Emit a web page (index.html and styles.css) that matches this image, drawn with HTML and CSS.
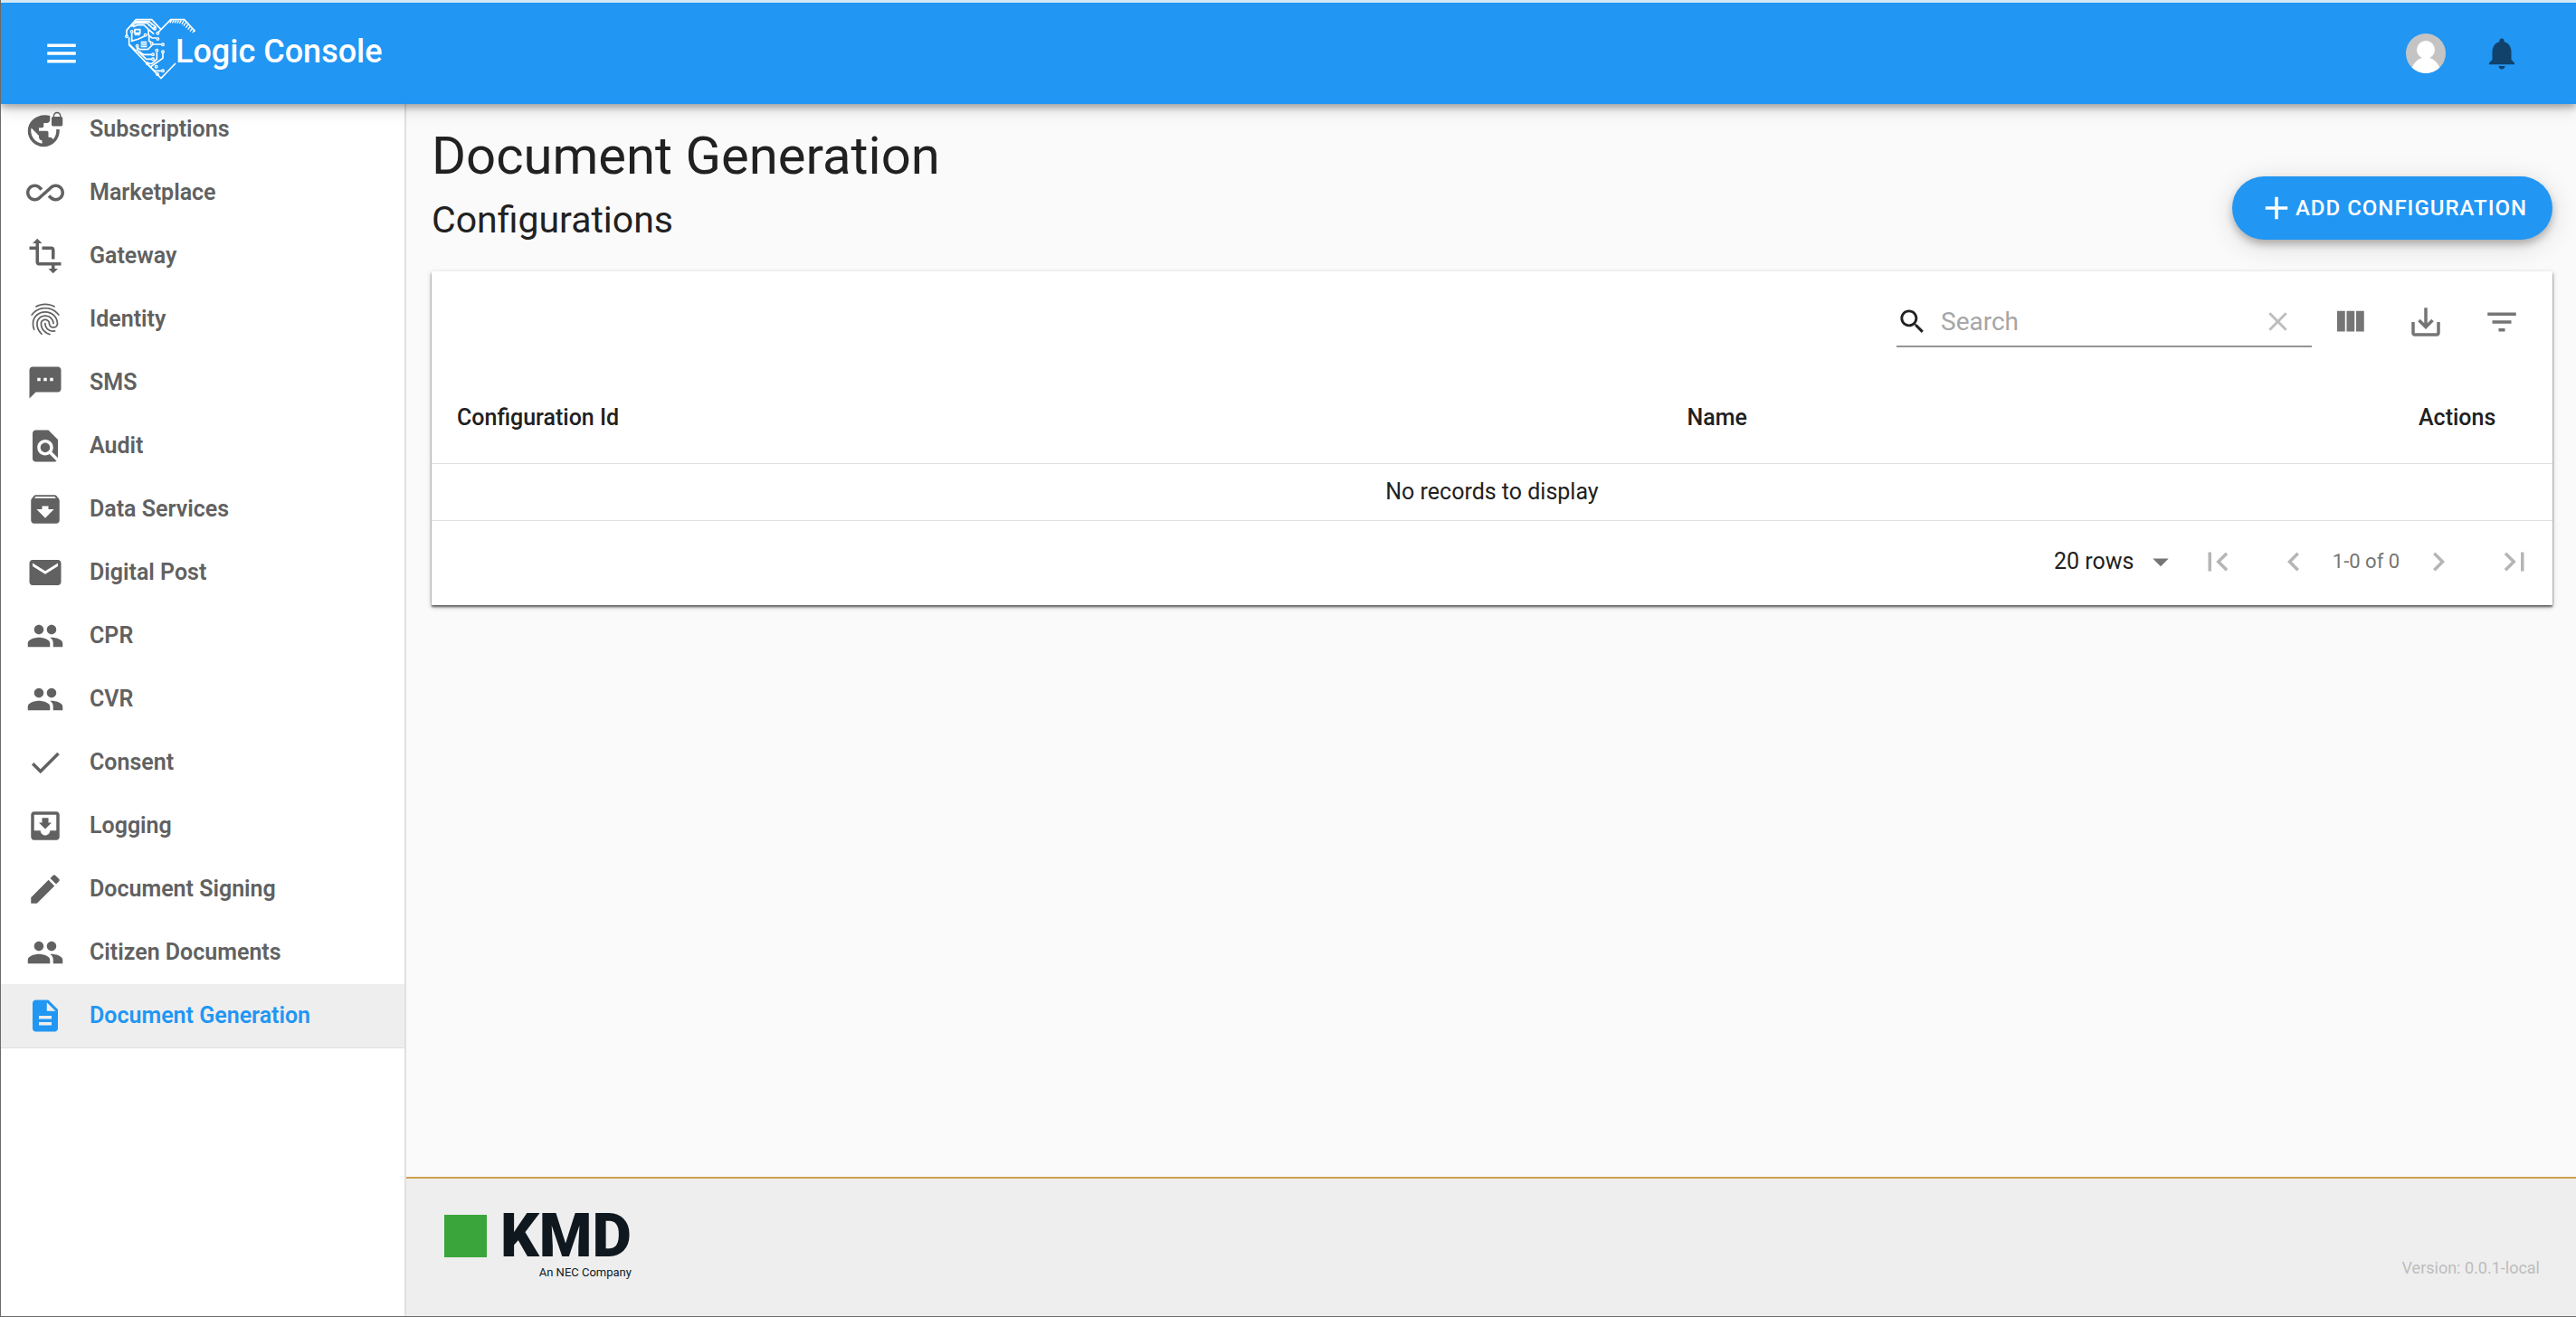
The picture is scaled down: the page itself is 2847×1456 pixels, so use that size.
FILE: index.html
```html
<!DOCTYPE html>
<html lang="en">
<head>
<meta charset="utf-8">
<meta name="viewport" content="width=device-width, initial-scale=1">
<title>Logic Console</title>
<link rel="stylesheet" href="styles.css">
</head>
<body>
<header class="app-bar">
  <button class="icon-button" type="button" aria-label="Toggle menu">
    <svg class="icon" viewBox="0 0 24 24"><path d="M3 18h18v-2H3v2zm0-5h18v-2H3v2zm0-7v2h18V6H3z"/></svg>
  </button>
  <a class="brand" href="#">
    <svg class="brand-heart" viewBox="54 58 240 210" aria-hidden="true">
      <g fill="none" stroke="currentColor" stroke-width="5">
        <path d="M60 117V101L91 66H143L174 99M164 109L206 66H251L287 105"/>
        <path d="M68 125V150L174 261L222 211"/>
        <path d="M77 112V137L98 131L119 121M76 89L89 77H128L147 96H153M84 72H134L158 92M81 90L95 84H117L132 98L150 114"/>
        <path d="M132 98V117L144 127H158M95 158L104 165L131 164L147 148H176M95 158V168L117 182H143M96 170L125 197H143M70 149L92 171M129 212H143L160 197V175M140 222L160 208L180 194V177M132 217L153 236H176M134 121V136L141 142"/>
        <path d="M107 141H127M107 148H127M107 155H127M87 99H104V111H87zM89 111V119M95 111V119M101 111V119"/>
        <path d="M209 68L203 77M217 68L211 77M225 68L219 77M233 69L227 78M241 69L235 79M249 70L243 82M256 76L249 87M263 83L256 93M270 89L263 99M277 96L270 105M285 102L278 109" stroke-width="4"/>
        <g stroke-width="4">
          <circle cx="60" cy="122" r="4"/><circle cx="77" cy="106" r="4"/><circle cx="122" cy="117" r="4"/><circle cx="153" cy="96" r="4"/><circle cx="163" cy="111" r="4"/><circle cx="163" cy="130" r="4"/><circle cx="143" cy="145" r="4"/><circle cx="180" cy="149" r="4"/><circle cx="95" cy="153" r="4"/><circle cx="147" cy="182" r="4"/><circle cx="147" cy="197" r="4"/><circle cx="160" cy="168" r="4"/><circle cx="180" cy="173" r="4"/><circle cx="129" cy="212" r="4"/><circle cx="158" cy="222" r="4"/><circle cx="180" cy="236" r="4"/><circle cx="162" cy="247" r="4"/>
        </g>
      </g>
      <g fill="currentColor"><circle cx="134" cy="75" r="2"/><circle cx="142" cy="82" r="2"/><circle cx="134" cy="86" r="2"/></g>
    </svg>
    <span class="brand-name">Logic Console</span>
  </a>
  <button class="icon-button" type="button" aria-label="Account">
    <svg class="avatar" viewBox="0 0 44 44"><defs><clipPath id="avatar-clip"><circle cx="22" cy="22" r="22"/></clipPath></defs><g clip-path="url(#avatar-clip)"><path fill="#c4c4c4" d="M0 0h44v44H0z"/><circle cx="22" cy="18" r="10" fill="#fff"/><path fill="#fff" d="M6 40c2-8 8-12 12-13h8c4 1 10 5 12 13v5H6z"/></g></svg>
  </button>
  <button class="icon-button icon-button-bell" type="button" aria-label="Notifications">
    <svg class="icon" viewBox="0 0 24 24"><path d="M12 22c1.1 0 2-.9 2-2h-4c0 1.1.89 2 2 2zm6-6v-5c0-3.07-1.64-5.64-4.5-6.32V4c0-.83-.67-1.5-1.5-1.5s-1.5.67-1.5 1.5v.68C7.63 5.36 6 7.92 6 11v5l-2 2v1h16v-1l-2-2z"/></svg>
  </button>
</header>

<div class="shell">
  <nav class="sidebar" aria-label="Services">
    <ul class="nav-list">
      <li><a class="nav-item" href="#"><svg class="icon" viewBox="0 0 24 24"><path d="M22 4v-.5C22 2.12 20.88 1 19.5 1S17 2.12 17 3.5V4c-.55 0-1 .45-1 1v4c0 .55.45 1 1 1h5c.55 0 1-.45 1-1V5c0-.55-.45-1-1-1zm-.8 0h-3.4v-.5c0-.94.76-1.7 1.7-1.7s1.7.76 1.7 1.7V4zm-2.28 8c.04.33.08.66.08 1 0 2.08-.8 3.97-2.1 5.39-.26-.81-1-1.39-1.9-1.39h-1v-3c0-.55-.45-1-1-1H8v-2h2c.55 0 1-.45 1-1V8h2c1.1 0 2-.9 2-2V3.46c-.95-.3-1.95-.46-3-.46C5.48 3 1 7.48 1 13s4.48 10 10 10 10-4.48 10-10c0-.34-.02-.67-.05-1h-2.03zM10 20.93c-3.95-.49-7-3.85-7-7.93 0-.62.08-1.21.21-1.79L8 16v1c0 1.1.9 2 2 2v1.93z"/></svg>Subscriptions</a></li>
      <li><a class="nav-item" href="#"><svg class="icon" viewBox="0 0 24 24"><path d="M18.6 6.62c-1.44 0-2.8.56-3.77 1.53L12 10.66 10.48 12h.01L7.8 14.39c-.64.64-1.49.99-2.4.99-1.87 0-3.39-1.51-3.39-3.38S3.53 8.62 5.4 8.62c.91 0 1.76.35 2.44 1.03l1.13 1 1.51-1.34L9.22 8.2C8.2 7.18 6.84 6.62 5.4 6.62 2.42 6.62 0 9.04 0 12s2.42 5.38 5.4 5.38c1.44 0 2.8-.56 3.77-1.53l2.83-2.5.01.01L13.52 12h-.01l2.69-2.39c.64-.64 1.49-.99 2.4-.99 1.87 0 3.39 1.51 3.39 3.38s-1.52 3.38-3.39 3.38c-.9 0-1.76-.35-2.44-1.03l-1.14-1.01-1.51 1.34 1.27 1.12c1.02 1.01 2.37 1.57 3.82 1.57 2.98 0 5.4-2.41 5.4-5.38s-2.42-5.37-5.4-5.37z"/></svg>Marketplace</a></li>
      <li><a class="nav-item" href="#"><svg class="icon" viewBox="0 0 24 24"><path d="M22 18v-2H8V4h2L7 1 4 4h2v2H2v2h4v8c0 1.1.9 2 2 2h8v2h-2l3 3 3-3h-2v-2h4zM10 8h6v6h2V8c0-1.1-.9-2-2-2h-6v2z"/></svg>Gateway</a></li>
      <li><a class="nav-item" href="#"><svg class="icon" viewBox="0 0 24 24"><path d="M17.81 4.47c-.08 0-.16-.02-.23-.06C15.66 3.42 14 3 12.01 3c-1.98 0-3.86.47-5.57 1.41-.24.13-.54.04-.68-.2-.13-.24-.04-.55.2-.68C7.82 2.52 9.86 2 12.01 2c2.13 0 3.99.47 6.03 1.52.25.13.34.43.21.67-.09.18-.26.28-.44.28zM3.5 9.72c-.1 0-.2-.03-.29-.09-.23-.16-.28-.47-.12-.7.99-1.4 2.25-2.5 3.75-3.27C9.98 4.04 14 4.03 17.15 5.65c1.5.77 2.76 1.86 3.75 3.25.16.22.11.54-.12.7-.23.16-.54.11-.7-.12-.9-1.26-2.04-2.25-3.39-2.94-2.87-1.47-6.54-1.47-9.4.01-1.36.7-2.5 1.7-3.4 2.96-.08.14-.23.21-.39.21zm6.25 12.07c-.13 0-.26-.05-.35-.15-.87-.87-1.34-1.43-2.01-2.64-.69-1.23-1.05-2.73-1.05-4.34 0-2.97 2.54-5.39 5.66-5.39s5.66 2.42 5.66 5.39c0 .28-.22.5-.5.5s-.5-.22-.5-.5c0-2.42-2.09-4.39-4.66-4.39-2.57 0-4.66 1.97-4.66 4.39 0 1.44.32 2.77.93 3.85.64 1.15 1.08 1.64 1.85 2.42.19.2.19.51 0 .71-.11.1-.24.15-.37.15zm7.17-1.85c-1.19 0-2.24-.3-3.1-.89-1.49-1.01-2.38-2.65-2.38-4.39 0-.28.22-.5.5-.5s.5.22.5.5c0 1.41.72 2.74 1.94 3.56.71.48 1.54.71 2.54.71.24 0 .64-.03 1.04-.1.27-.05.53.13.58.41.05.27-.13.53-.41.58-.57.11-1.07.12-1.21.12zM14.91 22c-.04 0-.09-.01-.13-.02-1.59-.44-2.63-1.03-3.72-2.1-1.4-1.39-2.17-3.24-2.17-5.22 0-1.62 1.38-2.94 3.08-2.94 1.7 0 3.08 1.32 3.08 2.94 0 1.07.93 1.94 2.08 1.94s2.08-.87 2.08-1.94c0-3.77-3.25-6.83-7.25-6.83-2.84 0-5.44 1.58-6.61 4.03-.39.81-.59 1.76-.59 2.8 0 .78.07 2.01.67 3.61.1.26-.03.55-.29.64-.26.1-.55-.04-.64-.29-.49-1.31-.73-2.61-.73-3.96 0-1.2.23-2.29.68-3.24 1.33-2.79 4.28-4.6 7.51-4.6 4.55 0 8.25 3.51 8.25 7.83 0 1.62-1.38 2.94-3.08 2.94s-3.08-1.32-3.08-2.94c0-1.07-.93-1.94-2.08-1.94s-2.08.87-2.08 1.94c0 1.71.66 3.31 1.87 4.51.95.94 1.86 1.46 3.27 1.85.27.07.42.35.35.61-.05.23-.26.38-.47.38z"/></svg>Identity</a></li>
      <li><a class="nav-item" href="#"><svg class="icon" viewBox="0 0 24 24"><path d="M20 2H4c-1.1 0-1.99.9-1.99 2L2 22l4-4h14c1.1 0 2-.9 2-2V4c0-1.1-.9-2-2-2zM9 11H7V9h2v2zm4 0h-2V9h2v2zm4 0h-2V9h2v2z"/></svg>SMS</a></li>
      <li><a class="nav-item" href="#"><svg class="icon" viewBox="0 0 24 24"><path d="M20 19.59V8l-6-6H6c-1.1 0-1.99.9-1.99 2L4 20c0 1.1.89 2 1.99 2H18c.45 0 .85-.15 1.19-.4l-4.43-4.43c-.8.52-1.74.83-2.76.83-2.76 0-5-2.24-5-5s2.24-5 5-5 5 2.24 5 5c0 1.02-.31 1.96-.83 2.75L20 19.59zM9 13c0 1.66 1.34 3 3 3s3-1.34 3-3-1.34-3-3-3-3 1.34-3 3z"/></svg>Audit</a></li>
      <li><a class="nav-item" href="#"><svg class="icon" viewBox="0 0 24 24"><path d="M20.54 5.23l-1.39-1.68C18.88 3.21 18.47 3 18 3H6c-.47 0-.88.21-1.16.55L3.46 5.23C3.17 5.57 3 6.02 3 6.5V19c0 1.1.9 2 2 2h14c1.1 0 2-.9 2-2V6.5c0-.48-.17-.93-.46-1.27zM12 17.5L6.5 12H10v-2h4v2h3.5L12 17.5zM5.12 5l.81-1h12l.94 1H5.12z"/></svg>Data Services</a></li>
      <li><a class="nav-item" href="#"><svg class="icon" viewBox="0 0 24 24"><path d="M20 4H4c-1.1 0-1.99.9-1.99 2L2 18c0 1.1.9 2 2 2h16c1.1 0 2-.9 2-2V6c0-1.1-.9-2-2-2zm0 4l-8 5-8-5V6l8 5 8-5v2z"/></svg>Digital Post</a></li>
      <li><a class="nav-item" href="#"><svg class="icon" viewBox="0 0 24 24"><path id="people" d="M16 11c1.66 0 2.99-1.34 2.99-3S17.66 5 16 5c-1.66 0-3 1.34-3 3s1.34 3 3 3zm-8 0c1.66 0 2.99-1.34 2.99-3S9.66 5 8 5C6.34 5 5 6.34 5 8s1.34 3 3 3zm0 2c-2.33 0-7 1.17-7 3.5V19h14v-2.5c0-2.33-4.67-3.5-7-3.5zm8 0c-.29 0-.62.02-.97.05 1.16.84 1.97 1.97 1.97 3.45V19h6v-2.5c0-2.33-4.67-3.5-7-3.5z"/></svg>CPR</a></li>
      <li><a class="nav-item" href="#"><svg class="icon" viewBox="0 0 24 24"><use href="#people"/></svg>CVR</a></li>
      <li><a class="nav-item" href="#"><svg class="icon" viewBox="0 0 24 24"><path d="M9 16.17L4.83 12l-1.42 1.41L9 19 21 7l-1.41-1.41z"/></svg>Consent</a></li>
      <li><a class="nav-item" href="#"><svg class="icon" viewBox="0 0 24 24"><path d="M19 3H4.99c-1.11 0-1.98.9-1.98 2L3 19c0 1.1.88 2 1.99 2H19c1.1 0 2-.9 2-2V5c0-1.1-.9-2-2-2zm0 12h-4c0 1.66-1.35 3-3 3s-3-1.34-3-3H4.99V5H19v10zm-3-5h-2V7h-4v3H8l4 4 4-4z"/></svg>Logging</a></li>
      <li><a class="nav-item" href="#"><svg class="icon" viewBox="0 0 24 24"><path d="M3 17.25V21h3.75L17.81 9.94l-3.75-3.75L3 17.25zM20.71 7.04c.39-.39.39-1.02 0-1.41l-2.34-2.34c-.39-.39-1.02-.39-1.41 0l-1.83 1.83 3.75 3.75 1.83-1.83z"/></svg>Document Signing</a></li>
      <li><a class="nav-item" href="#"><svg class="icon" viewBox="0 0 24 24"><use href="#people"/></svg>Citizen Documents</a></li>
      <li><a class="nav-item nav-item-active" href="#" aria-current="page"><svg class="icon" viewBox="0 0 24 24"><path d="M14 2H6c-1.1 0-1.99.9-1.99 2L4 20c0 1.1.89 2 1.99 2H18c1.1 0 2-.9 2-2V8l-6-6zm2 16H8v-2h8v2zm0-4H8v-2h8v2zm-3-5V3.5L18.5 9H13z"/></svg>Document Generation</a></li>
    </ul>
  </nav>

  <div class="content">
    <main class="page">
      <div class="page-header">
        <div class="page-titles">
          <h1 class="page-title">Document Generation</h1>
          <h2 class="page-subtitle">Configurations</h2>
        </div>
        <button class="add-button" type="button">
          <svg class="icon" viewBox="0 0 24 24"><path d="M19 13h-6v6h-2v-6H5v-2h6V5h2v6h6v2z"/></svg>Add configuration
        </button>
      </div>

      <section class="card" aria-label="Configurations">
        <div class="toolbar">
          <div class="search">
            <svg class="icon-small search-icon" viewBox="0 0 24 24"><path d="M15.5 14h-.79l-.28-.27C15.41 12.59 16 11.11 16 9.5 16 5.91 13.09 3 9.5 3S3 5.91 3 9.5 5.91 16 9.5 16c1.61 0 3.09-.59 4.23-1.57l.27.28v.79l5 4.99L20.49 19l-4.99-5zm-6 0C7.01 14 5 11.99 5 9.5S7.01 5 9.5 5 14 7.01 14 9.5 11.99 14 9.5 14z"/></svg>
            <input class="search-input" type="text" placeholder="Search" aria-label="Search">
            <button class="clear-button" type="button" aria-label="Clear search" disabled>
              <svg class="icon-small" viewBox="0 0 24 24"><path d="M19 6.41L17.59 5 12 10.59 6.41 5 5 6.41 10.59 12 5 17.59 6.41 19 12 13.41 17.59 19 19 17.59 13.41 12z"/></svg>
            </button>
          </div>
          <button class="icon-button" type="button" aria-label="Show columns"><svg class="icon" viewBox="0 0 24 24"><path d="M10 18h5V5h-5v13zm-6 0h5V5H4v13zM16 5v13h5V5h-5z"/></svg></button>
          <button class="icon-button" type="button" aria-label="Export"><svg class="icon" viewBox="0 0 24 24"><path d="M19 12v7H5v-7H3v7c0 1.1.9 2 2 2h14c1.1 0 2-.9 2-2v-7h-2zm-6 .67l2.59-2.58L17 11.5l-5 5-5-5 1.41-1.41L11 12.67V3h2z"/></svg></button>
          <button class="icon-button" type="button" aria-label="Filter"><svg class="icon" viewBox="0 0 24 24"><path d="M10 18h4v-2h-4v2zM3 6v2h18V6H3zm3 7h12v-2H6v2z"/></svg></button>
        </div>

        <table class="data-table">
          <thead>
            <tr><th class="col-id" scope="col">Configuration Id</th><th scope="col">Name</th><th class="col-actions" scope="col">Actions</th></tr>
          </thead>
          <tbody>
            <tr><td class="empty-cell" colspan="3">No records to display</td></tr>
          </tbody>
        </table>

        <div class="pager">
          <div class="rows-field">
            <select class="rows-select" aria-label="Rows per page"><option>20 rows</option><option>50 rows</option></select>
            <svg class="icon rows-arrow" viewBox="0 0 24 24"><path d="M7 10l5 5 5-5z"/></svg>
          </div>
          <button class="icon-button" type="button" aria-label="First page" disabled><svg class="icon" viewBox="0 0 24 24"><path d="M18.41 16.59L13.82 12l4.59-4.59L17 6l-6 6 6 6zM6 6h2v12H6z"/></svg></button>
          <button class="icon-button" type="button" aria-label="Previous page" disabled><svg class="icon" viewBox="0 0 24 24"><path d="M15.41 7.41L14 6l-6 6 6 6 1.41-1.41L10.83 12z"/></svg></button>
          <span class="pager-range">1-0 of 0</span>
          <button class="icon-button" type="button" aria-label="Next page" disabled><svg class="icon" viewBox="0 0 24 24"><path d="M10 6L8.59 7.41 13.17 12l-4.58 4.59L10 18l6-6z"/></svg></button>
          <button class="icon-button" type="button" aria-label="Last page" disabled><svg class="icon" viewBox="0 0 24 24"><path d="M5.59 7.41L10.18 12l-4.59 4.59L7 18l6-6-6-6zM16 6h2v12h-2z"/></svg></button>
        </div>
      </section>
    </main>

    <footer class="footer">
      <div class="company">
        <span class="company-mark"></span>
        <span class="company-name">KMD</span>
        <span class="company-tagline">An NEC Company</span>
      </div>
      <span class="version">Version: 0.0.1-local</span>
    </footer>
  </div>
</div>
</body>
</html>
```
FILE: styles.css
```css
:root {
  --primary: #2196f3;
  --text: #212121;
  --muted: #616161;
  --line: #e0e0e0;
}

* {
  box-sizing: border-box;
}

body {
  margin: 0;
  min-height: 100vh;
  display: flex;
  flex-direction: column;
  border: solid #6b6b6b;
  border-width: 0 0 1px 1px;
  background: #fafafa;
  color: var(--text);
  font-family: Roboto, "Liberation Sans", sans-serif;
  font-size: 25px;
  line-height: 36px;
}

button,
input,
select {
  margin: 0;
  padding: 0;
  border: 0;
  background: none;
  color: inherit;
  font: inherit;
}

a {
  color: inherit;
  text-decoration: none;
}

.icon,
.icon-small {
  display: block;
  flex: none;
  width: 42px;
  height: 42px;
  fill: currentColor;
}

.icon-small {
  width: 35px;
  height: 35px;
}

.icon-button {
  display: flex;
  flex: none;
  align-items: center;
  justify-content: center;
  width: 84px;
  height: 84px;
  border-radius: 50%;
}

/* App bar */

.app-bar {
  position: sticky;
  top: 0;
  z-index: 2;
  display: flex;
  align-items: center;
  min-height: 115px;
  padding: 0 40px 0 25px;
  border-top: 3px solid #d3e8f5;
  background: var(--primary);
  color: #fff;
  box-shadow: 0 4px 7px rgba(0, 0, 0, 0.28), 0 7px 18px rgba(0, 0, 0, 0.12);
}

.brand {
  display: flex;
  align-items: center;
  margin-left: 28px;
  margin-right: auto;
}

.brand-heart {
  width: 80px;
  height: 70px;
  margin: 0 -24px 10px 0;
}

.brand-name {
  font-size: 36px;
  font-weight: 500;
  line-height: 56px;
  padding-bottom: 4px;
}

.avatar {
  display: block;
  width: 44px;
  height: 44px;
}

.icon-button-bell {
  color: #10426b;
}

/* Shell */

.shell {
  display: flex;
  flex: 1;
}

.sidebar {
  flex: none;
  width: 448px;
  border-right: 2px solid var(--line);
  background: #fff;
}

.nav-list {
  margin: -7px 0 0;
  padding: 0;
  list-style: none;
}

.nav-item {
  display: flex;
  align-items: center;
  gap: 28px;
  height: 70px;
  padding: 0 28px;
  color: var(--muted);
  font-weight: 600;
}

.nav-item-active {
  height: 71px;
  border-bottom: 1px solid var(--line);
  background: #eee;
  color: var(--primary);
}

.content {
  display: flex;
  flex: 1;
  flex-direction: column;
  min-width: 0;
}

/* Page */

.page {
  flex: 1;
  padding: 20px 26px 28px 28px;
}

.page-header {
  display: flex;
  align-items: flex-end;
  justify-content: space-between;
  margin-bottom: 35px;
}

.page-titles {
  display: grid;
  gap: 12px;
}

.page-title,
.page-subtitle {
  margin: 0;
  font-weight: 400;
}

.page-title {
  font-size: 58px;
  line-height: 74px;
}

.page-subtitle {
  font-size: 41px;
  line-height: 44px;
}

.add-button {
  display: flex;
  align-items: center;
  height: 70px;
  padding: 0 28px;
  border-radius: 35px;
  background: var(--primary);
  color: #fff;
  font-size: 24px;
  font-weight: 500;
  letter-spacing: 1px;
  text-transform: uppercase;
  box-shadow: 0 5px 9px rgba(0, 0, 0, 0.24), 0 6px 30px rgba(0, 0, 0, 0.14);
}

/* Table card */

.card {
  background: #fff;
  box-shadow: 0 2px 2px rgba(0, 0, 0, 0.5), 0 2px 5px rgba(0, 0, 0, 0.3);
}

.toolbar {
  display: flex;
  align-items: center;
  justify-content: flex-end;
  min-height: 112px;
  padding-right: 14px;
  color: #757575;
}

.search {
  display: flex;
  align-items: center;
  width: 459px;
  height: 56px;
  border-bottom: 2px solid #949494;
}

.search-icon {
  color: var(--text);
}

.search-input {
  flex: 1;
  min-width: 0;
  height: 54px;
  margin-left: 14px;
  color: var(--text);
  font-size: 28px;
}

.search-input::placeholder {
  color: #a6a6a6;
  opacity: 1;
}

.clear-button {
  width: 76px;
  color: #bdbdbd;
}

.clear-button .icon-small {
  margin: 0 auto;
}

.data-table {
  width: 100%;
  border-collapse: collapse;
  table-layout: fixed;
}

.data-table th,
.data-table td {
  padding: 0 28px;
  border-bottom: 1px solid var(--line);
}

.data-table th {
  height: 100px;
  font-weight: 500;
  text-align: left;
}

.data-table td {
  height: 63px;
}

.col-id {
  width: 58%;
}

.col-actions {
  width: 176px;
}

.data-table .empty-cell {
  text-align: center;
}

.pager {
  display: flex;
  align-items: center;
  justify-content: flex-end;
  min-height: 93px;
  padding-bottom: 3px;
}

.pager .icon-button {
  color: #b5b5b5;
}

.rows-field {
  display: grid;
  align-items: center;
  width: 139px;
}

.rows-select,
.rows-arrow {
  grid-area: 1 / 1;
}

.rows-select {
  appearance: none;
  width: 100%;
  height: 56px;
}

.rows-arrow {
  justify-self: end;
  color: #757575;
  pointer-events: none;
}

.pager-range {
  min-width: 76px;
  color: #757575;
  font-size: 22px;
  text-align: center;
}

/* Footer */

.footer {
  display: flex;
  align-items: center;
  justify-content: space-between;
  min-height: 154px;
  padding: 4px 40px 0 42px;
  border-top: 2px solid #cfa14e;
  background: #eee;
}

.company {
  display: grid;
  grid-template-columns: 47px auto;
  column-gap: 15px;
  row-gap: 5px;
  color: #10181f;
}

.company-mark {
  height: 47px;
  background: #3aa53a;
}

.company-name {
  font-size: 67px;
  font-weight: 900;
  line-height: 47px;
}

.company-tagline {
  grid-column: 2;
  justify-self: end;
  font-size: 13px;
  line-height: 24px;
}

.version {
  padding-top: 41px;
  color: #bdbdbd;
  font-size: 18px;
  line-height: 24px;
}
```
